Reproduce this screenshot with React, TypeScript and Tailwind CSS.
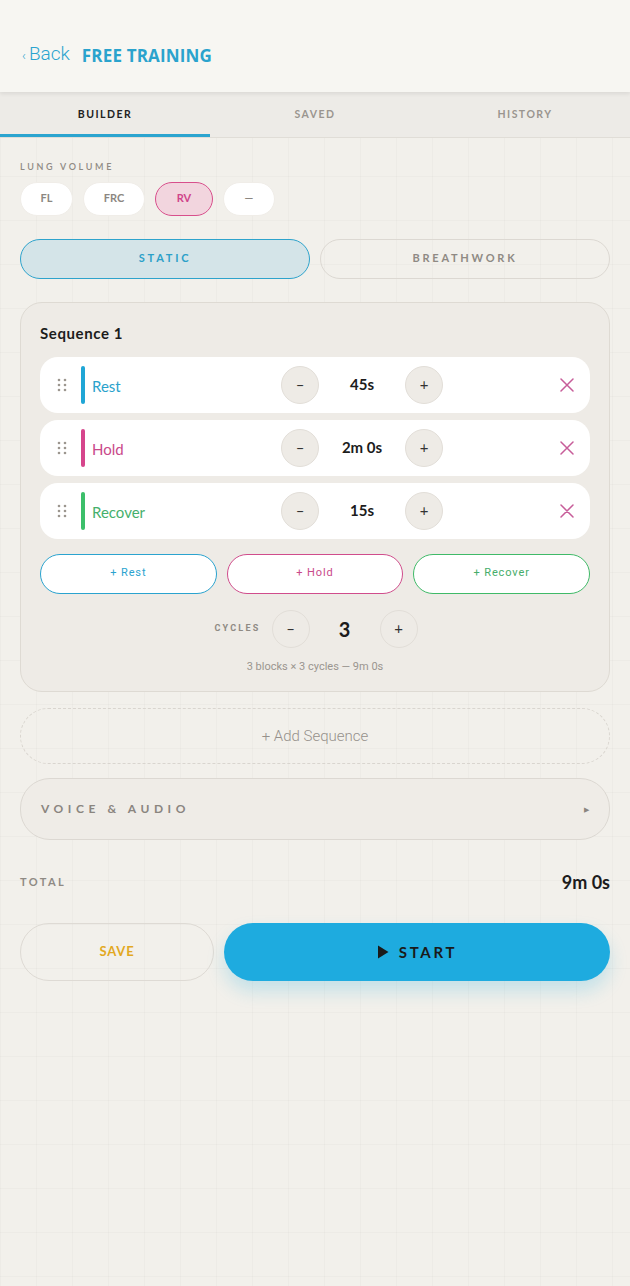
import { useState } from 'react';

const blocks = [
  { label: 'Rest', value: '45s', bar: 'bg-[#1fa6d6]', text: 'text-[#2aa2cc]' },
  { label: 'Hold', value: '2m 0s', bar: 'bg-[#d6458c]', text: 'text-[#c9498a]' },
  { label: 'Recover', value: '15s', bar: 'bg-[#3cbf6a]', text: 'text-[#45b06c]' },
];

function DragDots() {
  return (
    <svg width="10" height="14" viewBox="0 0 10 14" className="shrink-0">
      {[0, 1].map((c) =>
        [0, 1, 2].map((r) => <circle key={`${c}-${r}`} cx={2 + c * 6} cy={2 + r * 5} r="1.3" fill="#9c968f" />)
      )}
    </svg>
  );
}

function RoundBtn({ children }: { children: React.ReactNode }) {
  return (
    <button className="w-[38px] h-[38px] rounded-full bg-[#eeebe6] border border-[#e2ded8] flex items-center justify-center text-[#333] text-[15px] leading-none">
      {children}
    </button>
  );
}

export default function App() {
  const [vol, setVol] = useState('RV');
  const [mode, setMode] = useState('STATIC');

  return (
    <div
      className="w-full min-h-[1286px] bg-[#f2f0eb] bg-[linear-gradient(to_right,rgba(0,0,0,0.018)_1px,transparent_1px),linear-gradient(to_bottom,rgba(0,0,0,0.018)_1px,transparent_1px)] bg-[size:36px_44px]"
      style={{ fontFamily: 'Lato, "Noto Sans", sans-serif' }}
    >
      {/* Header */}
      <header className="h-[92px] bg-[#f7f6f2] flex items-end pb-[24px] px-[22px] shadow-[0_2px_4px_rgba(0,0,0,0.08)] relative z-10">
        <span className="text-[#2ba4cf] text-[19px] font-light" style={{ fontFamily: 'Roboto, sans-serif' }}>
          <span className="text-[13px] mr-[3px]">‹</span>Back
        </span>
        <span className="ml-3 text-[#2aa3cd] text-[17px] font-bold tracking-[0.01em]" style={{ fontFamily: '"Open Sans", sans-serif' }}>
          FREE TRAINING
        </span>
      </header>

      {/* Tabs */}
      <nav className="grid grid-cols-3 h-[46px] bg-[#edebe7] border-b border-[#e0ddd7]">
        {['BUILDER', 'SAVED', 'HISTORY'].map((t, i) => (
          <div
            key={t}
            className={`flex items-center justify-center text-[10.5px] font-bold tracking-[0.14em] ${
              i === 0 ? 'text-[#222] border-b-[3px] border-[#2ba4cf] pt-[3px]' : 'text-[#9a958f]'
            }`}
          >
            {t}
          </div>
        ))}
      </nav>

      <main className="px-5">
        {/* Lung volume */}
        <div className="pt-[22px] text-[9px] font-semibold tracking-[0.3em] text-[#8f8a84]">LUNG VOLUME</div>
        <div className="flex gap-[10px] mt-[8px]">
          {[
            { k: 'FL', w: 'w-[53px]' },
            { k: 'FRC', w: 'w-[62px]' },
            { k: 'RV', w: 'w-[58px]' },
            { k: '—', w: 'w-[52px]' },
          ].map(({ k, w }) => (
            <button
              key={k}
              onClick={() => setVol(k)}
              className={`${w} h-[34px] rounded-full text-[11px] font-bold border ${
                vol === k ? 'bg-[#f2d5de] border-[#d84f8c] text-[#d0458a]' : 'bg-white border-[#f0ede8] text-[#8c8781]'
              }`}
            >
              {k}
            </button>
          ))}
        </div>

        {/* Mode */}
        <div className="grid grid-cols-2 gap-[10px] mt-[23px]">
          {['STATIC', 'BREATHWORK'].map((m) => (
            <button
              key={m}
              onClick={() => setMode(m)}
              className={`h-[40px] rounded-full text-[11px] font-bold tracking-[0.25em] border ${
                mode === m ? 'bg-[#d4e4e8] border-[#2ea3cc] text-[#2ba0c8]' : 'border-[#dcd8d2] text-[#8f8a84]'
              }`}
            >
              {m}
            </button>
          ))}
        </div>

        {/* Sequence card */}
        <section className="mt-[23px] rounded-[22px] border border-[#dedad3] bg-[#eeebe6] px-[19px] pt-[20px] pb-[16px]">
          <h2 className="text-[15px] font-bold tracking-[0.04em] text-[#1c1c1c] leading-[20px]">Sequence 1</h2>
          <div className="flex flex-col gap-[7px] mt-[14px]">
            {blocks.map((b) => (
              <div key={b.label} className="h-[56px] bg-white rounded-[18px] flex items-center pl-[17px] pr-[15px]">
                <DragDots />
                <div className={`w-[4px] h-[38px] rounded-full ml-[14px] ${b.bar}`} />
                <span className={`ml-[7px] mt-[3px] text-[15px] w-[100px] ${b.text}`}>{b.label}</span>
                <div className="ml-[89px] flex items-center">
                  <RoundBtn>–</RoundBtn>
                  <span className="w-[86px] text-center text-[15px] font-bold text-[#1c1c1c]">{b.value}</span>
                  <RoundBtn>+</RoundBtn>
                </div>
                <svg width="14" height="14" viewBox="0 0 14 14" className="ml-auto mr-[1px]">
                  <path d="M1 1L13 13M13 1L1 13" stroke="#c75d99" strokeWidth="1.5" strokeLinecap="round" />
                </svg>
              </div>
            ))}
          </div>

          {/* Add block buttons */}
          <div className="grid grid-cols-3 gap-[10px] mt-[15px]">
            {[
              { t: '+ Rest', c: 'border-[#2aa3cf] text-[#2aa3cf]' },
              { t: '+ Hold', c: 'border-[#d04d8c] text-[#c9498a]' },
              { t: '+ Recover', c: 'border-[#3fba68] text-[#45ad6a]' },
            ].map((a) => (
              <button
                key={a.t}
                className={`h-[40px] rounded-full bg-white border-[1.5px] text-[11px] tracking-[0.08em] ${a.c}`}
                style={{ fontFamily: 'Roboto, sans-serif' }}
              >
                {a.t}
              </button>
            ))}
          </div>

          {/* Cycles */}
          <div className="flex items-center justify-center mt-[16px] pl-[2px]">
            <span className="text-[9px] font-bold tracking-[0.25em] text-[#8f8a84] mr-[11px]" style={{ fontFamily: 'Roboto, sans-serif' }}>
              CYCLES
            </span>
            <RoundBtn>–</RoundBtn>
            <span className="w-[70px] text-center text-[20px] font-bold text-[#1c1c1c]">3</span>
            <RoundBtn>+</RoundBtn>
          </div>
          <p className="text-center text-[11px] text-[#9a958f] mt-[11px]" style={{ fontFamily: 'Roboto, sans-serif' }}>
            3 blocks × 3 cycles — 9m 0s
          </p>
        </section>

        {/* Add sequence */}
        <button className="mt-[16px] w-full h-[56px] rounded-full border border-dashed border-[#d9d5cf] text-[15px] font-light text-[#96918b]" style={{ fontFamily: 'Roboto, sans-serif' }}>
          + Add Sequence
        </button>

        {/* Voice & audio */}
        <div className="mt-[14px] h-[62px] rounded-[30px] border border-[#dcd8d2] bg-[#efece7] flex items-center justify-between pl-[20px] pr-[20px]">
          <span className="text-[12px] font-bold tracking-[0.38em] text-[#8a857f]">VOICE &amp; AUDIO</span>
          <span className="text-[7px] text-[#8a857f]">▶</span>
        </div>

        {/* Total */}
        <div className="flex items-center justify-between mt-[29px]">
          <span className="text-[11px] font-bold tracking-[0.22em] text-[#8f8a84]">TOTAL</span>
          <span className="text-[18px] font-bold text-[#1c1c1c]">9m 0s</span>
        </div>

        {/* Actions */}
        <div className="flex gap-[10px] mt-[27px]">
          <button className="w-[194px] h-[58px] rounded-full border border-[#dedad4] text-[13px] font-bold tracking-[0.06em] text-[#e2a81f]">
            SAVE
          </button>
          <button className="flex-1 h-[58px] rounded-full bg-[#1eabdf] shadow-[0_10px_18px_rgba(30,171,223,0.22)] flex items-center justify-center gap-[10px] text-[15px] font-bold tracking-[0.18em] text-[#1a1a1a]">
            <svg width="12" height="14" viewBox="0 0 12 14">
              <path d="M1 0.5L11.5 7L1 13.5Z" fill="#1a1a1a" />
            </svg>
            START
          </button>
        </div>
      </main>
    </div>
  );
}
